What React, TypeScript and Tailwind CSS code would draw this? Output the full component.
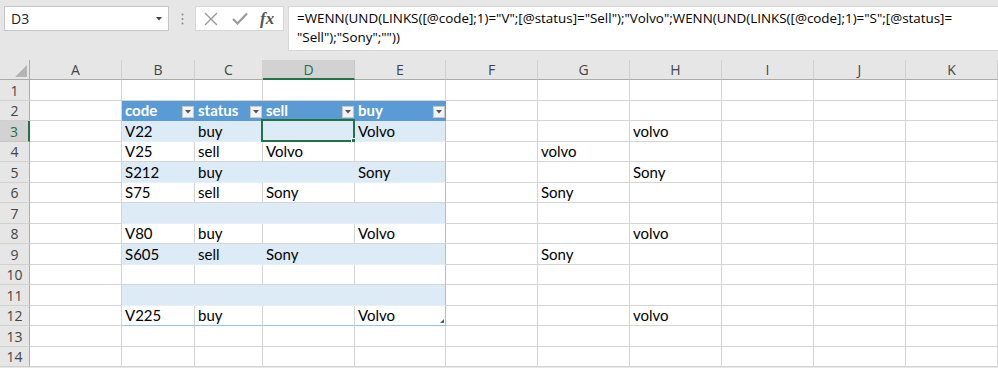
import React from "react";

const COLS = ["A", "B", "C", "D", "E", "F", "G", "H", "I", "J", "K"];

const DATA: Record<number, string[]> = {
  3: ["", "V22", "buy", "", "Volvo", "", "", "volvo", "", "", ""],
  4: ["", "V25", "sell", "Volvo", "", "", "volvo", "", "", "", ""],
  5: ["", "S212", "buy", "", "Sony", "", "", "Sony", "", "", ""],
  6: ["", "S75", "sell", "Sony", "", "", "Sony", "", "", "", ""],
  7: ["", "", "", "", "", "", "", "", "", "", ""],
  8: ["", "V80", "buy", "", "Volvo", "", "", "volvo", "", "", ""],
  9: ["", "S605", "sell", "Sony", "", "", "Sony", "", "", "", ""],
  10: ["", "", "", "", "", "", "", "", "", "", ""],
  11: ["", "", "", "", "", "", "", "", "", "", ""],
  12: ["", "V225", "buy", "", "Volvo", "", "", "volvo", "", "", ""],
};

const HEADERS = ["code", "status", "sell", "buy"];

function DropBtn() {
  return (
    <div className="self-end mb-[2px] mr-[1px] w-[12px] h-[12px] bg-[#f3f3f3] border border-[#c8c8c8] flex items-center justify-center shrink-0">
      <svg width="6" height="4" viewBox="0 0 6 4">
        <polygon points="0,0 6,0 3,3.5" fill="#555" />
      </svg>
    </div>
  );
}

function Cell({ r, c }: { r: number; c: number }) {
  const inTable = r >= 2 && r <= 12 && c >= 1 && c <= 4;
  const text = DATA[r] ? DATA[r][c] : "";
  const isSel = r === 3 && c === 3;

  if (inTable && r === 2) {
    return (
      <div className="bg-[#5b9bd5] border-b border-[#5b9bd5] flex items-center justify-between pl-[3px] min-w-0">
        <span className="text-white font-bold text-[15px] leading-none pb-[1px]">{HEADERS[c - 1]}</span>
        <DropBtn />
      </div>
    );
  }

  if (inTable) {
    const banded = r % 2 === 1;
    let cls = "relative flex items-center pl-[3px] min-w-0 ";
    if (banded) {
      cls += "bg-[#ddebf7] border-b border-[#e6eef8] ";
      cls += c === 4 ? "border-r border-r-[#9bc2e6] " : "border-r border-r-[#ddebf7] ";
    } else {
      cls += r === 12 ? "bg-white border-b border-[#9bc2e6] " : "bg-white border-b border-[#d4d4d4] ";
      cls += c === 4 ? "border-r border-r-[#9bc2e6] " : "border-r border-r-[#d4d4d4] ";
    }
    return (
      <div className={cls}>
        <span className="text-[15px] text-black leading-none whitespace-nowrap">{text}</span>
        {isSel && (
          <div className="absolute left-[-2px] top-[-2px] right-[-1px] bottom-[-1px] border-2 border-[#217346] pointer-events-none">
            <div className="absolute right-[-4px] bottom-[-4px] w-[6px] h-[6px] bg-[#217346] border border-white" />
          </div>
        )}
        {r === 12 && c === 4 && (
          <svg className="absolute right-[1px] bottom-[2px]" width="4" height="4" viewBox="0 0 4 4">
            <polygon points="4,0 4,4 0,4" fill="#3a5f8f" />
          </svg>
        )}
      </div>
    );
  }

  return (
    <div className="bg-white border-r border-b border-[#d4d4d4] flex items-center pl-[3px] min-w-0">
      <span className="text-[15px] text-black leading-none whitespace-nowrap">{text}</span>
    </div>
  );
}

export default function App() {
  const rows = Array.from({ length: 14 }, (_, i) => i + 1);
  return (
    <div className="w-[998px] h-[368px] bg-[#e6e6e6] overflow-hidden font-['Lato',sans-serif]">
      {/* Formula bar area */}
      <div className="h-[60px] flex items-start pt-[6px] pl-[4px]">
        <div className="w-[165px] h-[25px] bg-white border border-[#c6c6c6] flex items-center justify-between pl-[6px] pr-[6px]">
          <span className="font-['Open_Sans',sans-serif] text-[14px] text-[#222]">D3</span>
          <svg width="6" height="4" viewBox="0 0 6 4">
            <polygon points="0,0 6,0 3,3.5" fill="#444" />
          </svg>
        </div>
        <div className="w-[26px] h-[25px] flex items-center justify-center">
          <svg width="3" height="12" viewBox="0 0 3 12">
            <circle cx="1.5" cy="1.5" r="1" fill="#8a8a8a" />
            <circle cx="1.5" cy="6" r="1" fill="#8a8a8a" />
            <circle cx="1.5" cy="10.5" r="1" fill="#8a8a8a" />
          </svg>
        </div>
        <div className="w-[89px] h-[25px] bg-white border border-[#d6d6d6] flex items-center pl-[8px] gap-[14px]">
          <svg width="14" height="14" viewBox="0 0 14 14">
            <path d="M1 1 L13 13 M13 1 L1 13" stroke="#9a9a9a" strokeWidth="1.4" fill="none" />
          </svg>
          <svg width="16" height="13" viewBox="0 0 16 13">
            <path d="M1 7 L5.5 11.5 L15 1.5" stroke="#9a9a9a" strokeWidth="2.2" fill="none" />
          </svg>
          <span className="font-['Liberation_Serif',serif] italic font-bold text-[17px] text-[#555] leading-none -ml-[2px]">fx</span>
        </div>
        <div className="ml-[4px] flex-1 h-[45px] bg-white border-l border-t border-b border-[#d6d6d6] pl-[8px] pt-[2px] font-['Open_Sans',sans-serif] text-[13.4px] text-black leading-[19px] whitespace-nowrap">
          <div>=WENN(UND(LINKS([@code];1)="V";[@status]="Sell");"Volvo";WENN(UND(LINKS([@code];1)="S";[@status]=</div>
          <div>"Sell");"Sony";""))</div>
        </div>
      </div>

      {/* Grid */}
      <div className="grid grid-cols-[30px_92px_73px_68px_92px_91px_92px_92px_92px_92px_92px_92px] grid-rows-[20px_21px_20px_21px_20px_21px_20px_21px_20px_21px_20px_21px_20px_21px_20px]">
        {/* corner */}
        <div className="bg-[#e6e6e6] border-r border-b border-[#ababab] flex items-end justify-end pr-[2px] pb-[2px]">
          <svg width="12" height="12" viewBox="0 0 12 12">
            <polygon points="12,0 12,12 0,12" fill="#b4b4b4" />
          </svg>
        </div>
        {COLS.map((col) =>
          col === "D" ? (
            <div key={col} className="bg-[#d2d2d2] border-r border-[#c6c6c6] border-b-2 border-b-[#217346] flex items-center justify-center font-['Open_Sans',sans-serif] text-[14px] text-[#217346]">
              {col}
            </div>
          ) : (
            <div key={col} className="bg-[#e6e6e6] border-r border-[#cfcfcf] border-b border-b-[#ababab] flex items-center justify-center font-['Open_Sans',sans-serif] text-[14px] text-[#444]">
              {col}
            </div>
          )
        )}
        {rows.map((r) => (
          <React.Fragment key={r}>
            {r === 3 ? (
              <div className="bg-[#d2d2d2] border-r-2 border-r-[#217346] border-b border-b-[#c6c6c6] flex items-center justify-center font-['Open_Sans',sans-serif] text-[14px] text-[#217346]">
                {r}
              </div>
            ) : (
              <div className="bg-[#e6e6e6] border-r border-r-[#ababab] border-b border-b-[#d0d0d0] flex items-center justify-center font-['Open_Sans',sans-serif] text-[14px] text-[#444]">
                {r}
              </div>
            )}
            {COLS.map((_, c) => (
              <Cell key={c} r={r} c={c} />
            ))}
          </React.Fragment>
        ))}
      </div>
    </div>
  );
}
